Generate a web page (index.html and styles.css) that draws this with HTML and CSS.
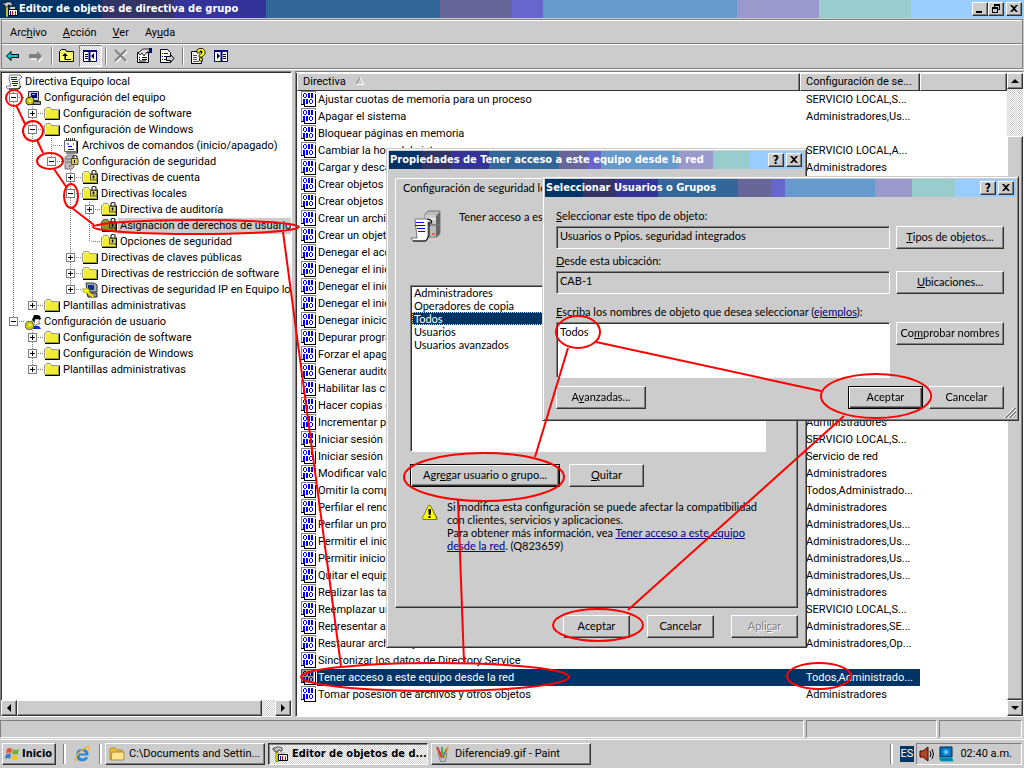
FILE: index.html
```html
<!DOCTYPE html>
<html lang="es">
<head>
    <meta charset="UTF-8">
    <title>Editor de objetos de directiva de grupo</title>
    <link rel="stylesheet" href="styles.css">
</head>
<body>

<!-- iconos -->
<svg class="sprite" aria-hidden="true">
    <symbol id="i-console" viewBox="0 0 16 16">
        <path d="M1 2h3v-1h4l2 1v3h-2v-1h-2v2h-3v-2h-2z" fill="#ccc" stroke="#000" stroke-width=".6"/>
        <path d="M4 6h2v10h-2z" fill="#ffff00" stroke="#333" stroke-width=".6"/>
        <path d="M6.500 8.500h9v6h-9z" fill="#fff" stroke="#000"/>
        <path d="M8.500 10v4" stroke="#00f"/><path d="M10.500 10v4M13.500 10v4" stroke="#f00"/>
        <path d="M8 6h5v2h-5z" fill="#ccc"/>
    </symbol>
    <symbol id="i-scroll" viewBox="0 0 16 16">
        <path d="M4 1h10l2 2-2 2h-1l1 7-2 3H2l-2-2 2-1h3L3 5z" fill="#fff" stroke="#555" stroke-width=".8"/>
        <path d="M5 3.500h6M5 5.500h6M6 7.500h6M6 9.500h6M7 11.500h4" stroke="#00f"/>
        <path d="M3 15h10l2-3" stroke="#000" fill="none"/>
    </symbol>
    <symbol id="i-pc" viewBox="0 0 16 16">
        <path d="M3.500 1.500h10v9h-10z" fill="#ccc" stroke="#333"/>
        <path d="M6 3h6v5H6z" fill="#000080"/><path d="M7 4.500h3" stroke="#6cf"/>
        <path d="M2.500 11.500h13v3h-13z" fill="#999" stroke="#222"/>
        <path d="M1 9l2-2 2 1 1-2 2 2 1 3-1 3-4 1-3-2z" fill="#cc0" stroke="#000" stroke-width=".7"/>
        <circle cx="5" cy="11" r="1" fill="#fff"/>
    </symbol>
    <symbol id="i-user" viewBox="0 0 16 16">
        <path d="M7 6l2-5h4l2 1 1 3-2 1-4-1v4z" fill="#000"/>
        <path d="M10 5h4v3l1 2h-3l-1 2-2-2z" fill="#fff" stroke="#333" stroke-width=".6"/>
        <path d="M9 12h5l2 3H8z" fill="#0033cc"/>
        <path d="M1 9l2-2 2 1 2-1 1 3 1 2-2 3-4 1-3-3z" fill="#cc0" stroke="#333" stroke-width=".7"/>
        <circle cx="5" cy="11" r="1" fill="#fff"/>
    </symbol>
    <symbol id="i-folder" viewBox="0 0 16 16">
        <path d="M1 3l1-1V1h5l1 2h6v9H1z" fill="#ffff66"/>
        <path d="M.5 12V3.500h1l1-2h4l1 2h7" fill="none" stroke="#999"/>
        <path d="M2 4h12v8H2z" fill="#f2ec38"/>
        <path d="M1 13.500h14.500V3.500" fill="none" stroke="#000"/>
        <path d="M1 12.500h13.500V4" fill="none" stroke="#999933"/>
    </symbol>
    <symbol id="i-lock" viewBox="0 0 16 16">
        <use href="#i-folder"/>
        <path d="M10 5V1.500l1-1h2l1 1V5" fill="none" stroke="#333" stroke-width="1.200"/>
        <path d="M8.500 4.500h6.500v5.500h-6.500z" fill="#d8d050" stroke="#333" stroke-width=".8"/>
        <path d="M11.500 5.500v3M10.500 7h2" stroke="#000"/>
    </symbol>
    <symbol id="i-notepad" viewBox="0 0 16 16">
        <path d="M1.500 2.500h12v11h-12z" fill="#fff" stroke="#666"/>
        <path d="M14.500 3v12H3" fill="none" stroke="#000"/>
        <path d="M3.500 0v3M5.500 0v3M7.500 0v3M9.500 0v3M11.500 0v3" stroke="#333"/>
        <path d="M4 6h2M5 8.500h4M10 6h1M5 11.500h6" stroke="#00f"/>
    </symbol>
    <symbol id="i-server" viewBox="0 0 16 16">
        <path d="M2 3l3-2h6v12l-2 2H2z" fill="#bbb" stroke="#777"/>
        <path d="M3 5h6M3 8h6" stroke="#666"/><path d="M6 12h2" stroke="#f00"/>
        <path d="M10 5V2.500l1-1h2l1 1V5" fill="none" stroke="#333" stroke-width="1.200"/>
        <path d="M8.500 4.500h6.500v6h-6.500z" fill="#d8d050" stroke="#333" stroke-width=".8"/><path d="M11.500 6v3" stroke="#000"/>
    </symbol>
    <symbol id="i-ipsec" viewBox="0 0 16 16">
        <path d="M4 1h8l3 2v7H5z" fill="#aaa" stroke="#333"/><path d="M6 3h6v5H6z" fill="#003399"/>
        <path d="M5 11h10v4H6z" fill="#999" stroke="#222"/>
        <path d="M1 6l2 2 1-2 3 1v3l5 4-1 2-6-5-4-1z" fill="#ff0" stroke="#880" stroke-width=".6"/>
    </symbol>
    <symbol id="i-policy" viewBox="0 0 16 16" shape-rendering="crispEdges">
        <path d="M1 1h12v13H1z" fill="#fff"/>
        <path d="M.5 14V.5h14V2" fill="none" stroke="#888"/>
        <path d="M0 13.500h3.500v2h11v-12h-1" fill="none" stroke="#000"/>
        <path d="M3 2h2v1h1v3H5v1H3V6H2V3h1zM3 3v3h2V3zM9 8h2v1h1v3h-1v1H9v-1H8V9h1zM9 9v3h2V9z" fill="#00f" fill-rule="evenodd"/>
        <path d="M7 2h2v5H7zM10 2h2v5h-2zM2 8h2v5H2zM5 8h2v5H5z" fill="#00f"/>
    </symbol>
    <symbol id="i-warn" viewBox="0 0 16 16">
        <path d="M7 1h2l6.500 12v2H1.500z" fill="#777"/>
        <path d="M6.500.5h2L14.500 13l-.5 1.500H1L.5 13z" fill="#ff0" stroke="#660" stroke-width=".8"/>
        <path d="M6.500 4h2.500v4l-.5 2h-1.500l-.5-2zM6.500 11h2v2h-2z" fill="#000"/>
    </symbol>
</svg>

<header class="titlebar main-title">
    <svg class="ico"><use href="#i-console"/></svg>
    <h1>Editor de objetos de directiva de grupo</h1>
    <div class="win-buttons">
        <button aria-label="Minimizar"><svg viewBox="0 0 12 10"><path d="M2 7h6v2H2z"/></svg></button>
        <button aria-label="Restaurar"><svg viewBox="0 0 12 10"><path d="M4 0h6v6H8V9H2V3h2zM5 2v1h3v2h1V2zM3 5v3h4V5z" fill-rule="evenodd"/></svg></button>
        <button class="close" aria-label="Cerrar"><svg viewBox="0 0 12 10"><path d="M2 1h2l2 2 2-2h2L7 4.500 10 8H8L6 6 4 8H2l3-3.500z"/></svg></button>
    </div>
</header>

<div class="bars">
    <nav class="menubar">
        <button>Arc<u>h</u>ivo</button>
        <button><u>A</u>cción</button>
        <button><u>V</u>er</button>
        <button>Ay<u>u</u>da</button>
    </nav>
    <div class="toolbar">
        <button aria-label="Atrás"><svg class="ico" viewBox="0 0 16 16"><path d="M1.500 8L6 3.500V6.500h7.500v3H6v3z" fill="#0cc" stroke="#000"/></svg></button>
        <button aria-label="Adelante"><svg class="ico" viewBox="0 0 16 16"><path d="M15 9l-4 5v-3H3" fill="none" stroke="#fff"/><path d="M14 8L9 3v3H1v4h8v3z" fill="#808080"/></svg></button>
        <span class="sep"></span>
        <button aria-label="Subir un nivel"><svg class="ico" viewBox="0 0 16 16"><path d="M.5 13.500v-10l2-2h4l1 2h7v10z" fill="#ffff66" stroke="#000"/><path d="M6 5l3 3H7v3h5v1H5.500V8H3z" fill="#000"/></svg></button>
        <button class="pressed" aria-label="Mostrar árbol"><svg class="ico" viewBox="0 0 16 16"><path d="M1.500 2.500h13v11h-13z" fill="#fff" stroke="#000080"/><path d="M1 3h14M7.500 3v10" stroke="#000080" stroke-width="2"/><path d="M3 6.500h3M3 8.500h3M3 10.500h3" stroke="#000"/><path d="M12 5v6L9 8z"/></svg></button>
        <span class="sep"></span>
        <button aria-label="Eliminar"><svg class="ico" viewBox="0 0 16 16"><path d="M3 3l11 11M14 3L3 14" stroke="#fff" stroke-width="2"/><path d="M2 2l11 11M13 2L2 13" stroke="#808080" stroke-width="2"/></svg></button>
        <button aria-label="Propiedades"><svg class="ico" viewBox="0 0 16 16"><path d="M1.500 4.500h11v10h-11z" fill="#fff" stroke="#000"/><path d="M3 9.500h1M6 9.500h5M3 11.500h1M6 11.500h5M3 13h7" stroke="#000"/><path d="M2 5l5-4h3l4 0v3h-3l-3 4-2-3-2 2z" fill="#ddd" stroke="#000" stroke-width=".8"/><path d="M13 0h3v5h-3z" fill="#000080"/></svg></button>
        <button aria-label="Exportar lista"><svg class="ico" viewBox="0 0 16 16"><path d="M1.500 1.500h7l3 3v10h-10z" fill="#fff" stroke="#000"/><path d="M3 5.500h1M5 5.500h4M3 8.500h1M5 8.500h3M3 11.500h1M5 11.500h3" stroke="#000080"/><path d="M7.500 8.500h4v-2l3.500 4-3.500 4v-2h-4z" fill="#ccc" stroke="#000"/></svg></button>
        <span class="sep"></span>
        <button aria-label="Ayuda"><svg class="ico" viewBox="0 0 16 16"><path d="M1.500 3.500h10v12h-10z" fill="#fff" stroke="#000"/><path d="M3 7.500h4M3 9.500h4M3 11.500h4M3 13.500h6" stroke="#555"/><path d="M7 5V2l2-1.500h4L15 3v3l-3 3H9V7l3-2V3h-2v2zM9.500 10h3v3h-3z" fill="#ff0" stroke="#000" stroke-width=".8"/></svg></button>
        <button aria-label="Mostrar panel"><svg class="ico" viewBox="0 0 16 16"><path d="M1.500 2.500h13v11h-13z" fill="#fff" stroke="#000080"/><path d="M1 3h14M8.500 3v10" stroke="#000080" stroke-width="2"/><path d="M10 6.500h3M10 8.500h3M10 10.500h3" stroke="#000"/><path d="M4 5v6l3-3z"/></svg></button>
    </div>
</div>

<main class="panes">
    <section class="pane tree-pane">
        <div class="tree">
            <div class="node root"><svg class="ico"><use href="#i-scroll"/></svg><span>Directiva Equipo local</span></div>
            <ul>
                <li>
                    <div class="node"><i class="box minus"></i><svg class="ico"><use href="#i-pc"/></svg><span>Configuración del equipo</span></div>
                    <ul>
                        <li><div class="node"><i class="box plus"></i><svg class="ico"><use href="#i-folder"/></svg><span>Configuración de software</span></div></li>
                        <li>
                            <div class="node"><i class="box minus"></i><svg class="ico"><use href="#i-folder"/></svg><span>Configuración de Windows</span></div>
                            <ul>
                                <li><div class="node"><i class="none"></i><svg class="ico"><use href="#i-notepad"/></svg><span>Archivos de comandos (inicio/apagado)</span></div></li>
                                <li>
                                    <div class="node"><i class="box minus"></i><svg class="ico"><use href="#i-server"/></svg><span>Configuración de seguridad</span></div>
                                    <ul>
                                        <li><div class="node"><i class="box plus"></i><svg class="ico"><use href="#i-lock"/></svg><span>Directivas de cuenta</span></div></li>
                                        <li>
                                            <div class="node"><i class="box minus"></i><svg class="ico"><use href="#i-lock"/></svg><span>Directivas locales</span></div>
                                            <ul>
                                                <li><div class="node"><i class="box plus"></i><svg class="ico"><use href="#i-lock"/></svg><span>Directiva de auditoría</span></div></li>
                                                <li><div class="node selected"><i class="none"></i><svg class="ico"><use href="#i-lock"/></svg><span>Asignación de derechos de usuario</span></div></li>
                                                <li><div class="node"><i class="none"></i><svg class="ico"><use href="#i-lock"/></svg><span>Opciones de seguridad</span></div></li>
                                            </ul>
                                        </li>
                                        <li><div class="node"><i class="box plus"></i><svg class="ico"><use href="#i-folder"/></svg><span>Directivas de claves públicas</span></div></li>
                                        <li><div class="node"><i class="box plus"></i><svg class="ico"><use href="#i-folder"/></svg><span>Directivas de restricción de software</span></div></li>
                                        <li><div class="node"><i class="box plus"></i><svg class="ico"><use href="#i-ipsec"/></svg><span>Directivas de seguridad IP en Equipo local</span></div></li>
                                    </ul>
                                </li>
                            </ul>
                        </li>
                        <li><div class="node"><i class="box plus"></i><svg class="ico"><use href="#i-folder"/></svg><span>Plantillas administrativas</span></div></li>
                    </ul>
                </li>
                <li>
                    <div class="node"><i class="box minus"></i><svg class="ico"><use href="#i-user"/></svg><span>Configuración de usuario</span></div>
                    <ul>
                        <li><div class="node"><i class="box plus"></i><svg class="ico"><use href="#i-folder"/></svg><span>Configuración de software</span></div></li>
                        <li><div class="node"><i class="box plus"></i><svg class="ico"><use href="#i-folder"/></svg><span>Configuración de Windows</span></div></li>
                        <li><div class="node"><i class="box plus"></i><svg class="ico"><use href="#i-folder"/></svg><span>Plantillas administrativas</span></div></li>
                    </ul>
                </li>
            </ul>
        </div>
        <div class="scroll horizontal">
            <button aria-label="Izquierda"><svg viewBox="0 0 8 8"><path d="M6 0v8L2 4z"/></svg></button>
            <div class="thumb"></div>
            <div class="track"></div>
            <button aria-label="Derecha"><svg viewBox="0 0 8 8"><path d="M2 0v8l4-4z"/></svg></button>
        </div>
    </section>

    <section class="pane list-pane">
        <div class="list">
            <table>
                <colgroup><col class="c-name"><col class="c-conf"><col></colgroup>
                <thead>
                    <tr>
                        <th>Directiva <svg class="sort" viewBox="0 0 8 8"><path d="M4 0L0 7.500" stroke="#808080"/><path d="M4 0l4 7.500H0" fill="none" stroke="#fff"/></svg></th>
                        <th>Configuración de se...</th>
                        <th></th>
                    </tr>
                </thead>
                <tbody id="directivas"></tbody>
            </table>
        </div>
        <div class="scroll vertical">
            <button aria-label="Arriba"><svg viewBox="0 0 8 8"><path d="M0 6h8L4 2z"/></svg></button>
            <div class="track"></div>
            <div class="thumb"></div>
            <button aria-label="Abajo"><svg viewBox="0 0 8 8"><path d="M0 2h8L4 6z"/></svg></button>
        </div>
    </section>
</main>

<div class="statusbar"><span class="st-main"></span><span class="st-mid"></span><span class="st-end"></span></div>

<footer class="taskbar">
    <button class="start"><svg class="ico" viewBox="0 0 16 16"><path d="M3 3q3-2 5 0L7 7.500q-2-2-5 0z" fill="#e8502a"/><path d="M9 3q3 2 6 0l-1 5q-3 1-6 0z" fill="#6cb33f"/><path d="M2 8.500q3-2 5 0L6 13q-2-2-5 0z" fill="#3a78d8"/><path d="M8 9q3 2 6 0l-1 5q-3 1-6-1z" fill="#f8c420"/></svg>Inicio</button>
    <span class="grip"></span>
    <button class="quick" aria-label="Internet Explorer"><svg class="ico" viewBox="0 0 16 16"><path d="M14.500 9.500H5.500q.5 3 3.200 3 1.700 0 2.300-1.200h3.200q-1.500 4-5.700 4-6.300 0-6.300-6.300t6.300-6.300q6.300 0 6 6.800zM5.500 7.500h5.700Q11 5 8.400 5T5.500 7.500z" fill="#2a86d8" fill-rule="evenodd"/><path d="M3 15Q-1 15 4 8 10 1 14 1q2 1 0 4" fill="none" stroke="#f5b830" stroke-width="1.500"/></svg></button>
    <span class="grip"></span>
    <div class="tasks">
        <button><svg class="ico" viewBox="0 0 16 16"><path d="M1 3l1-1h4l2 2h5v3H5l-3 7-1-1z" fill="#f0c040" stroke="#a57818" stroke-width=".8"/><path d="M3 6h12v7l-1 1H2z" fill="#ffe68a" stroke="#a57818" stroke-width=".8"/></svg><span>C:\Documents and Settin...</span></button>
        <button class="active"><svg class="ico"><use href="#i-console"/></svg><span>Editor de objetos de d...</span></button>
        <button><svg class="ico" viewBox="0 0 16 16"><path d="M3 7h9l-1.500 8.500h-5z" fill="#b8c8c8" stroke="#567" stroke-width=".7"/><path d="M2 1l5 11" stroke="#e33" stroke-width="2"/><path d="M7 1v10" stroke="#4a4" stroke-width="2"/><path d="M13 1L8 12" stroke="#e90" stroke-width="2"/><path d="M11 3l-3 9" stroke="#36c"/></svg><span>Diferencia9.gif - Paint</span></button>
    </div>
    <span class="grip end"></span>
    <span class="lang">ES</span>
    <div class="tray">
        <svg class="ico" viewBox="0 0 16 16"><path d="M1 5h3l5-4v14l-5-4H1z" fill="#b5482a" stroke="#400"/><path d="M11 5q2 3 0 6M13 3q3 5 0 10" fill="none" stroke="#000"/></svg>
        <svg class="ico" viewBox="0 0 16 16"><path d="M2 1h12v10H2z" fill="#0078c8" stroke="#024"/><path d="M5 6h6M8 3v6M6 4l4 4M10 4L6 8" stroke="#8df" stroke-width=".8"/><path d="M1 12h13l1 3H3z" fill="#0078c8" stroke="#0aa"/></svg>
        <time>02:40 a.m.</time>
    </div>
</footer>

<!-- Propiedades -->
<section class="dialog props">
    <div class="titlebar">
        <h2>Propiedades de Tener acceso a este equipo desde la red</h2>
        <div class="win-buttons">
            <button aria-label="Ayuda"><b>?</b></button>
            <button class="close" aria-label="Cerrar"><svg viewBox="0 0 12 10"><path d="M2 1h2l2 2 2-2h2L7 4.500 10 8H8L6 6 4 8H2l3-3.500z"/></svg></button>
        </div>
    </div>
    <div class="tab">Configuración de seguridad local</div>
    <div class="sheet">
        <div class="intro">
            <svg class="big" viewBox="0 0 32 32"><path d="M15 4l3-3h12v22l-3 4H15z" fill="#bbb" stroke="#777"/><path d="M26 6l4-4v22l-4 3z" fill="#666"/><path d="M15 5h11v9H15z" fill="#ccc"/><path d="M15 9h11M15 15h15" stroke="#fff"/><path d="M16 15h14" stroke="#333"/><path d="M22 24h3" stroke="#f00"/><path d="M5 9h13l4 3h-4v14l-2 5H3l-2-3h6z" fill="#fff" stroke="#777"/><path d="M17 9l4 1 1 3h-4M3 31h13l3-5V13" fill="none" stroke="#000"/><path d="M6 12.500h8M5 15.500h10M7 18.500h8M8 21.500h7" stroke="#00f"/></svg>
            <span>Tener acceso a este equipo desde la red</span>
        </div>
        <ul class="listbox" role="listbox">
            <li role="option">Administradores</li>
            <li role="option">Operadores de copia</li>
            <li role="option" aria-selected="true">Todos</li>
            <li role="option">Usuarios</li>
            <li role="option">Usuarios avanzados</li>
        </ul>
        <div class="row">
            <button class="btn default wide">Agr<u>e</u>gar usuario o grupo...</button>
            <button class="btn"><u>Q</u>uitar</button>
        </div>
        <div class="warning">
            <svg class="ico"><use href="#i-warn"/></svg>
            <p>Si modifica esta configuración se puede afectar la compatibilidad con clientes, servicios y aplicaciones.<br>
            Para obtener más información, vea <a href="#">Tener acceso a este equipo desde la red</a>. (Q823659)</p>
        </div>
    </div>
    <div class="actions">
        <button class="btn">Aceptar</button>
        <button class="btn">Cancelar</button>
        <button class="btn apply" disabled>Apli<u>c</u>ar</button>
    </div>
</section>

<!-- Seleccionar Usuarios o Grupos -->
<section class="dialog picker">
    <div class="titlebar">
        <h2>Seleccionar Usuarios o Grupos</h2>
        <div class="win-buttons">
            <button aria-label="Ayuda"><b>?</b></button>
            <button class="close" aria-label="Cerrar"><svg viewBox="0 0 12 10"><path d="M2 1h2l2 2 2-2h2L7 4.500 10 8H8L6 6 4 8H2l3-3.500z"/></svg></button>
        </div>
    </div>
    <form class="fields" onsubmit="return false">
        <label for="tipo"><u>S</u>eleccionar este tipo de objeto:</label>
        <input type="text" id="tipo" value="Usuarios o Ppios. seguridad integrados" readonly>
        <button class="btn"><u>T</u>ipos de objetos...</button>
        <label for="ubicacion"><u>D</u>esde esta ubicación:</label>
        <input type="text" id="ubicacion" value="CAB-1" readonly>
        <button class="btn"><u>U</u>bicaciones...</button>
        <label for="nombres" class="names"><u>E</u>scriba los nombres de objeto que desea seleccionar (<a href="#">ejemplos</a>):</label>
        <textarea id="nombres" spellcheck="false" autofocus>Todos</textarea>
        <button class="btn">Co<u>m</u>probar nombres</button>
    </form>
    <div class="picker-actions">
        <button class="btn advanced">A<u>v</u>anzadas...</button>
        <button class="btn default">Aceptar</button>
        <button class="btn">Cancelar</button>
    </div>
    <svg class="resize" viewBox="0 0 12 12"><path d="M0 12L12 0M4 12l8-8M8 12l4-4" stroke="#fff"/><path d="M1 12L12 1M2 12L12 2M5 12l7-7M6 12l6-6M9 12l3-3" stroke="#808080"/></svg>
</section>

<!-- recorrido marcado en rojo -->
<svg class="marks" viewBox="0 0 1024 768" aria-hidden="true">
    <ellipse cx="14" cy="98" rx="8" ry="8"/>
    <ellipse cx="33" cy="131" rx="10" ry="10"/>
    <ellipse cx="50" cy="161" rx="13" ry="8"/>
    <ellipse cx="71" cy="196" rx="7" ry="12"/>
    <ellipse cx="196" cy="227" rx="103" ry="7"/>
    <ellipse cx="435" cy="677" rx="134" ry="14"/>
    <ellipse cx="819" cy="676" rx="32" ry="13"/>
    <ellipse cx="484" cy="477" rx="80" ry="24"/>
    <ellipse cx="578" cy="332" rx="22" ry="16"/>
    <ellipse cx="876" cy="396" rx="55" ry="22"/>
    <ellipse cx="598" cy="625" rx="45" ry="16"/>
    <path d="M16 105L25 124M37 140l6 13M54 169l13 19M72 208l22 17M283 232l58 434M458 500l6 162M568 348L535 457M596 342l225 49M844 416L628 610"/>
</svg>

<script>
    const directivas = [
        ['Ajustar cuotas de memoria para un proceso', 'SERVICIO LOCAL,S...'],
        ['Apagar el sistema', 'Administradores,Us...'],
        ['Bloquear páginas en memoria', ''],
        ['Cambiar la hora del sistema', 'SERVICIO LOCAL,A...'],
        ['Cargar y descargar controladores', 'Administradores'],
        ['Crear objetos compartidos', ''],
        ['Crear objetos globales', ''],
        ['Crear un archivo de paginación', ''],
        ['Crear un objeto identificador', ''],
        ['Denegar el acceso desde la red', ''],
        ['Denegar el inicio de sesión local', ''],
        ['Denegar el inicio de sesión', ''],
        ['Denegar el inicio como servicio', ''],
        ['Denegar inicio de sesión', ''],
        ['Depurar programas', ''],
        ['Forzar el apagado remoto', ''],
        ['Generar auditorías de seguridad', ''],
        ['Habilitar las cuentas', ''],
        ['Hacer copias de seguridad', ''],
        ['Incrementar prioridades', 'Administradores'],
        ['Iniciar sesión como servicio', 'SERVICIO LOCAL,S...'],
        ['Iniciar sesión como proceso', 'Servicio de red'],
        ['Modificar valores de entorno', 'Administradores'],
        ['Omitir la comprobación', 'Todos,Administrado...'],
        ['Perfilar el rendimiento', 'Administradores'],
        ['Perfilar un proceso', 'Administradores,Us...'],
        ['Permitir el inicio de sesión local', 'Administradores,Us...'],
        ['Permitir inicio de sesión', 'Administradores,Us...'],
        ['Quitar el equipo', 'Administradores,Us...'],
        ['Realizar las tareas', 'Administradores'],
        ['Reemplazar un símbolo', 'SERVICIO LOCAL,S...'],
        ['Representar a un cliente', 'Administradores,SE...'],
        ['Restaurar archivos y directorios', 'Administradores,Op...'],
        ['Sincronizar los datos de Directory Service', ''],
        ['Tener acceso a este equipo desde la red', 'Todos,Administrado...'],
        ['Tomar posesión de archivos y otros objetos', 'Administradores']
    ];

    document.getElementById('directivas').innerHTML = directivas.map(([nombre, valor], i) => `
        <tr class="${i === 34 ? 'selected' : ''}">
            <td><div class="cell"><svg class="ico"><use href="#i-policy"/></svg><span>${nombre}</span></div></td>
            <td>${valor}</td>
            <td></td>
        </tr>`).join('');
</script>
</body>
</html>
```
FILE: styles.css
```css
:root {
    --face: #ccc;
    --shadow: #808080;
    --dark: #333;
    --select: #003366;
    --dither: repeating-conic-gradient(#fff 0 25%, #ccc 0 50%) 0 0 / 2px 2px;
    --ui: Tahoma, Roboto, sans-serif;
    --ui-bold: Tahoma, "DejaVu Sans Condensed", sans-serif;
    --dlg: "MS Sans Serif", Lato, sans-serif;
}

* {
    box-sizing: border-box;
}

body {
    margin: 0;
    height: 100vh;
    display: flex;
    flex-direction: column;
    position: relative;
    overflow: hidden;
    background: var(--face);
    font: 11px/16px var(--ui);
    color: #000;
}

.sprite {
    display: none;
}

svg {
    display: block;
    flex: none;
}

.ico {
    width: 16px;
    height: 16px;
}

ul {
    list-style: none;
    margin: 0;
    padding: 0;
}

button {
    font: inherit;
    color: inherit;
    background: var(--face);
    border: 0;
    padding: 0;
    margin: 0;
    border-radius: 0;
    white-space: nowrap;
}

a {
    color: #000080;
}

/* title bars */
.titlebar {
    height: 18px;
    flex: none;
    display: flex;
    align-items: center;
    padding: 0 2px 0 1px;
    color: #fff;
    background: linear-gradient(90deg, #003366 0 8%, #333366 0 15%, #333399 0 24%, #336699 0 41%, #666699 0 48%, #6666cc 0 51%, #6699cc 0 70%, #9999cc 0 78%, #99cccc 0 87%, #99ccff 0);
}

.main-title {
    padding-left: 2px;
    background: linear-gradient(90deg, #003366 0 10%, #333366 0 17%, #333399 0 26%, #336699 0 43%, #666699 0 50%, #6666cc 0 53%, #6699cc 0 72%, #9999cc 0 80%, #99cccc 0 89%, #99ccff 0);
    gap: 1px;
}

h1, h2 {
    margin: 0;
    flex: 1;
    font: bold 11px/18px var(--ui-bold);
    white-space: nowrap;
}

.win-buttons {
    display: flex;
}

.win-buttons button {
    width: 16px;
    height: 14px;
    display: flex;
    align-items: center;
    justify-content: center;
    color: #000;
    font: 12px/12px var(--ui-bold);
}

.win-buttons .close {
    margin-left: 2px;
}

.win-buttons svg {
    width: 12px;
    height: 10px;
}

.win-buttons button, .btn, .scroll button, .thumb, .start, .tasks button {
    border: 1px solid;
    border-color: #fff var(--dark) var(--dark) #fff;
    box-shadow: inset -1px -1px var(--shadow);
}

/* menu and toolbar */
.bars {
    margin: 1px 1px 2px;
    border: 1px solid var(--shadow);
    box-shadow: 0 1px #fff;
}

.menubar {
    height: 23px;
    display: flex;
    align-items: center;
    gap: 16px;
    padding: 2px 0 0 8px;
    border-top: 1px solid #fff;
}

.toolbar {
    height: 25px;
    display: flex;
    align-items: center;
    border-top: 1px solid var(--shadow);
    box-shadow: inset 0 1px #fff;
}

.toolbar button {
    width: 23px;
    height: 22px;
    padding: 3px;
}

.toolbar .pressed {
    border: 1px solid;
    border-color: var(--shadow) #fff #fff var(--shadow);
    padding: 2px;
    background: var(--dither);
}

.sep {
    width: 2px;
    height: 18px;
    margin: 0 3px;
    border-left: 1px solid var(--shadow);
    border-right: 1px solid #fff;
}

/* panes */
.panes {
    flex: 1;
    min-height: 0;
    display: flex;
    gap: 3px;
}

.pane {
    background: #fff;
    border: 1px solid;
    border-color: var(--shadow) #fff #fff var(--shadow);
    overflow: hidden;
    display: flex;
}

.pane::before {
    content: "";
    flex: none;
    background: var(--dark);
}

.tree-pane {
    width: 292px;
    flex-direction: column;
}

.tree-pane::before {
    height: 1px;
}

.list-pane {
    flex: 1;
    min-width: 0;
    padding-top: 1px;
}

.list-pane::before {
    width: 1px;
}

.tree {
    flex: 1;
    overflow: hidden;
    padding-top: 1px;
    border-left: 1px solid var(--dark);
}

.tree > ul {
    padding-left: 7px;
}

.tree li ul {
    padding-left: 19px;
}

/* dotted connectors */
.tree li {
    background:
        repeating-linear-gradient(#808080 0 1px, #fff 1px 2px) 4px 0 / 1px 100% no-repeat,
        repeating-linear-gradient(90deg, #808080 0 1px, #fff 1px 2px) 4px 7px / 12px 1px no-repeat;
}

.tree li:last-child {
    background-size: 1px 8px, 12px 1px;
}

.node {
    height: 16px;
    display: flex;
    align-items: center;
    white-space: nowrap;
}

.root {
    padding-left: 4px;
}

.node span {
    padding-left: 2px;
    margin-left: 1px;
    flex: 1;
}

.node.selected span {
    background: var(--face);
}

.node i {
    width: 9px;
    height: 9px;
    margin: 0 7px 1px 0;
    flex: none;
}

.box {
    border: 1px solid var(--shadow);
    background: linear-gradient(#000, #000) center / 5px 1px no-repeat, #fff;
}

.box.plus {
    background: linear-gradient(#000, #000) center / 5px 1px no-repeat, linear-gradient(#000, #000) center / 1px 5px no-repeat, #fff;
}

/* scrollbars */
.scroll {
    display: flex;
    flex: none;
    background: var(--face);
}

.scroll button {
    width: 16px;
    height: 16px;
    display: flex;
    align-items: center;
    justify-content: center;
}

.scroll svg {
    width: 8px;
    height: 8px;
}

.thumb {
    background: var(--face);
}

.track {
    background: var(--dither);
}

.horizontal .thumb {
    flex: 19;
}

.horizontal .track {
    flex: 1;
}

.vertical {
    flex-direction: column;
    width: 16px;
}

.vertical .track {
    flex: 1;
}

.vertical .thumb {
    flex: 12;
}

/* policy list */
.list {
    flex: 1;
    min-width: 0;
    overflow: hidden;
}

table {
    width: 100%;
    table-layout: fixed;
    border-collapse: separate;
    border-spacing: 0;
}

.c-name {
    width: 503px;
}

.c-conf {
    width: 120px;
}

th {
    height: 18px;
    padding: 0 5px;
    background: var(--face);
    border: 1px solid;
    border-color: #fff var(--dark) var(--dark) #fff;
    box-shadow: inset -1px 0 var(--shadow);
    font-weight: normal;
    text-align: left;
    line-height: 16px;
    white-space: nowrap;
}

.sort {
    display: inline-block;
    width: 8px;
    height: 8px;
    margin-left: 8px;
}

td {
    height: 17px;
    padding: 0;
    white-space: nowrap;
    overflow: hidden;
}

td:nth-child(2) {
    padding-left: 6px;
}

.cell {
    display: flex;
    padding-left: 4px;
    height: 17px;
}

.cell span {
    flex: 1;
    padding-left: 1px;
    line-height: 17px;
}

.selected .cell span, .selected td:nth-child(2) {
    background: var(--select);
    color: #fff;
}

.selected .ico {
    filter: brightness(0.6);
}

/* status bar and taskbar */
.statusbar {
    height: 18px;
    flex: none;
    margin: 3px 2px 1px 0;
    display: flex;
    gap: 2px;
}

.statusbar span {
    border: 1px solid;
    border-color: var(--shadow) #fff #fff var(--shadow);
}

.st-main {
    flex: 1;
}

.st-mid {
    width: 131px;
}

.st-end {
    width: 83px;
}

.taskbar {
    height: 29px;
    flex: none;
    border-top: 1px solid #fff;
    display: flex;
    align-items: center;
    padding: 0 2px 1px;
}

.start {
    width: 54px;
    height: 22px;
    display: flex;
    align-items: center;
    gap: 2px;
    padding-left: 1px;
    font: bold 11px/16px var(--ui-bold);
}

.grip {
    width: 3px;
    height: 20px;
    margin: 0 3px 0 7px;
    border-left: 1px solid var(--shadow);
    border-right: 2px solid #fff;
}

.grip.end {
    margin-right: 7px;
}

.quick {
    width: 20px;
    margin-left: 3px;
    padding: 0 2px;
}

.tasks {
    flex: 1;
    display: flex;
    gap: 3px;
}

.tasks button {
    width: 160px;
    height: 22px;
    display: flex;
    align-items: center;
    gap: 4px;
    padding: 1px 3px 0;
}

.tasks .active {
    font: bold 11px/16px var(--ui-bold);
    background: var(--dither);
    border-color: var(--dark) #fff #fff var(--dark);
    box-shadow: inset 1px 1px var(--shadow);
}

.lang {
    width: 14px;
    margin-right: 2px;
    overflow: hidden;
    background: var(--select);
    color: #fff;
}

.tray {
    height: 22px;
    display: flex;
    align-items: center;
    gap: 3px;
    padding: 1px 9px 0 2px;
    border: 1px solid;
    border-color: var(--shadow) #fff #fff var(--shadow);
}

.tray time {
    margin-left: 3px;
}

/* dialogs */
.dialog {
    position: absolute;
    display: flex;
    flex-direction: column;
    padding: 2px;
    background: var(--face);
    border: 1px solid;
    border-color: var(--face) var(--dark) var(--dark) var(--face);
    box-shadow: inset 1px 1px #fff, inset -1px -1px var(--shadow);
    font: 11px/13px var(--dlg);
}

.props {
    left: 386px;
    top: 148px;
    width: 421px;
    height: 500px;
}

.picker {
    left: 542px;
    top: 176px;
    width: 477px;
    height: 245px;
}

.btn {
    height: 23px;
    width: 75px;
    padding-bottom: 2px;
}

.btn.default {
    border-color: #000;
    box-shadow: inset 1px 1px #fff, inset -1px -1px var(--dark), inset -2px -2px var(--shadow);
}

.btn:disabled {
    color: var(--shadow);
    text-shadow: 1px 1px #fff;
}

.tab {
    align-self: flex-start;
    height: 20px;
    margin: 9px 0 0 6px;
    padding: 2px 7px;
    border: 1px solid #fff;
    border-bottom: 0;
    border-radius: 2px 2px 0 0;
}

.sheet {
    flex: 1;
    margin: 0 6px 0 6px;
    padding: 11px 31px 0 14px;
    border: 1px solid;
    border-color: var(--face) var(--dark) var(--dark) #fff;
    box-shadow: inset -1px -1px var(--shadow);
}

.intro {
    display: flex;
    gap: 17px;
    height: 75px;
}

.big {
    width: 32px;
    height: 32px;
}

.listbox {
    height: 167px;
    padding: 0 1px;
    background: #fff;
    border: 1px solid;
    border-color: var(--shadow) #fff #fff var(--shadow);
    box-shadow: inset 1px 1px var(--dark);
}

.listbox li {
    padding-left: 2px;
}

.listbox li[aria-selected] {
    background: var(--select);
    color: #fff;
    outline: 1px dotted #fc9;
    outline-offset: -1px;
}

.row {
    display: flex;
    gap: 9px;
    margin-top: 12px;
}

.wide {
    width: 150px;
}

.warning {
    display: flex;
    gap: 9px;
    padding: 13px 0 0 12px;
}

.warning .ico {
    margin-top: 5px;
}

.warning p {
    margin: 0;
}

.actions {
    display: flex;
    justify-content: flex-end;
    gap: 17px;
    padding: 7px 6px 7px;
}

.actions .btn {
    width: 67px;
}

.fields {
    display: grid;
    grid-template-columns: 1fr 108px;
    column-gap: 6px;
    padding: 11px 12px 0 11px;
    align-items: start;
}

.fields label {
    grid-column: 1 / 3;
    line-height: 15px;
    padding-bottom: 3px;
}

.fields .names {
    padding-top: 6px;
}

.fields input, .fields textarea {
    width: 100%;
    height: 23px;
    margin: 0 0 4px;
    padding: 0 3px 5px;
    border: 1px solid;
    border-color: var(--shadow) #fff #fff var(--shadow);
    box-shadow: inset 1px 1px var(--dark);
    border-radius: 0;
    background: var(--face);
    font: 11px/13px var(--dlg);
    resize: none;
    outline: 0;
}

.fields textarea {
    height: 56px;
    padding-top: 2px;
    background: #fff;
}

.fields .btn {
    width: 100%;
}

.picker-actions {
    display: flex;
    gap: 6px;
    padding: 4px 12px 0 11px;
}

.advanced {
    width: 90px;
    margin-right: auto;
}

.resize {
    position: absolute;
    right: 2px;
    bottom: 2px;
    width: 12px;
    height: 12px;
}

/* red route drawn over the windows */
.marks {
    position: absolute;
    left: 0;
    top: 0;
    width: 1024px;
    height: 768px;
    pointer-events: none;
    fill: none;
    stroke: #f00;
    stroke-width: 2;
}
```
